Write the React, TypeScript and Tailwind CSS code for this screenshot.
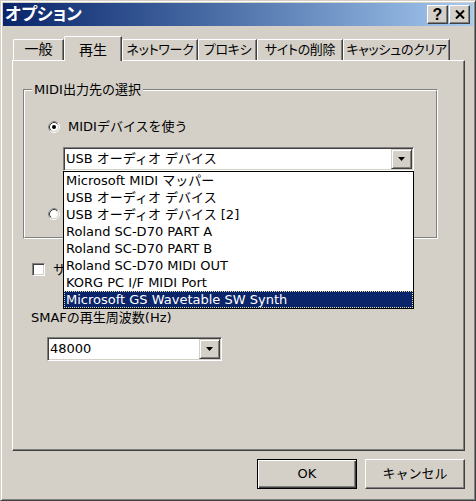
import React from 'react'

const F = "font-['DejaVu_Sans','Noto_Sans_CJK_JP',sans-serif]"
const PALT = "[font-feature-settings:'palt']"

const tabs = [
  { label: '一般', w: 'w-[51px]', t: 'text-[14px]' },
  { label: '再生', w: 'w-[58px]', t: 'text-[14px]', active: true },
  { label: 'ネットワーク', w: 'w-[76px]', t: 'text-[13px] tracking-[-0.3px]' },
  { label: 'プロキシ', w: 'w-[59px]', t: 'text-[13px] tracking-[-0.3px]' },
  { label: 'サイトの削除', w: 'w-[86px]', t: 'text-[13px] tracking-[-0.3px]' },
  { label: 'キャッシュのクリア', w: 'w-[107px]', t: 'text-[13px] tracking-[-0.3px]' },
]

const devices = [
  'Microsoft MIDI マッパー',
  'USB オーディオ デバイス',
  'USB オーディオ デバイス [2]',
  'Roland SC-D70 PART A',
  'Roland SC-D70 PART B',
  'Roland SC-D70 MIDI OUT',
  'KORG PC I/F MIDI Port',
  'Microsoft GS Wavetable SW Synth',
]

function Radio({ checked }: { checked?: boolean }) {
  return (
    <svg width="12" height="12" viewBox="0 0 12 12" className="shrink-0">
      <circle cx="6" cy="6" r="5.5" fill="none" stroke="#fff" />
      <path d="M2.11 9.89A5.5 5.5 0 0 1 9.89 2.11" fill="none" stroke="#808080" />
      <circle cx="6" cy="6" r="4.5" fill="#fff" stroke="#D4D0C8" />
      <path d="M2.82 9.18A4.5 4.5 0 0 1 9.18 2.82" fill="none" stroke="#404040" />
      {checked && <circle cx="6" cy="6" r="2" fill="#000" />}
    </svg>
  )
}

function DropButton() {
  return (
    <div className="flex h-full w-[21px] shrink-0 items-center justify-center border border-t-[#D4D0C8] border-l-[#D4D0C8] border-r-[#404040] border-b-[#404040] bg-[#D4D0C8] shadow-[inset_1px_1px_0_#fff,inset_-1px_-1px_0_#808080]">
      <svg width="7" height="4" viewBox="0 0 7 4">
        <polygon points="0,0 7,0 3.5,4" fill="#000" />
      </svg>
    </div>
  )
}

function Combo({ value, w }: { value: string; w: string }) {
  return (
    <div className={`flex h-[24px] ${w} border border-t-[#808080] border-l-[#808080] border-r-white border-b-white bg-white shadow-[inset_1px_1px_0_#404040,inset_-1px_-1px_0_#D4D0C8] p-px`}>
      <div className="flex-1 overflow-hidden whitespace-nowrap pl-px leading-[20px]">{value}</div>
      <DropButton />
    </div>
  )
}

export default function App() {
  return (
    <div className={`relative h-[501px] w-[476px] border border-t-[#D4D0C8] border-l-[#D4D0C8] border-r-[#404040] border-b-[#404040] bg-[#D4D0C8] p-[2px] text-[13px] text-black shadow-[inset_1px_1px_0_#fff,inset_-1px_-1px_0_#808080] ${F}`}>
      {/* title bar */}
      <div className="flex h-[23px] items-center justify-between bg-linear-to-r from-[#0A246A] to-[#A6CAF0] pl-[2px] pr-[3px]">
        <span className={`text-[17px] font-bold leading-none text-white ${PALT}`}>オプション</span>
        <div className="flex gap-[1px]">
          <div className="flex h-[19px] w-[21px] items-center justify-center border border-t-white border-l-white border-r-[#404040] border-b-[#404040] bg-[#D4D0C8] font-['Liberation_Sans',sans-serif] text-[16px] font-bold leading-none shadow-[inset_-1px_-1px_0_#808080]">
            ?
          </div>
          <div className="flex h-[19px] w-[21px] items-center justify-center border border-t-white border-l-white border-r-[#404040] border-b-[#404040] bg-[#D4D0C8] shadow-[inset_-1px_-1px_0_#808080]">
            <svg width="10" height="9" viewBox="0 0 10 9">
              <path d="M1 0.5l8 8M9 0.5l-8 8" stroke="#000" strokeWidth="2" />
            </svg>
          </div>
        </div>
      </div>

      <div className="pl-[9px] pr-[8px] pt-[10px]">
        {/* tabs */}
        <div className={`ml-px flex h-[24px] items-end ${PALT}`}>
          {tabs.map((t) =>
            t.active ? (
              <div
                key={t.label}
                className={`relative z-10 -mb-px flex h-[25px] ${t.w} ${t.t} items-start justify-center whitespace-nowrap rounded-tl-[2px] border-t border-l border-r border-t-white border-l-white border-r-[#404040] bg-[#D4D0C8] pt-[3px] shadow-[inset_-1px_0_0_#808080]`}
              >
                {t.label}
              </div>
            ) : (
              <div
                key={t.label}
                className={`flex h-[21px] ${t.w} ${t.t} items-center justify-center whitespace-nowrap rounded-tl-[2px] border-t border-l border-r border-t-white border-l-white border-r-[#404040] pb-px shadow-[inset_-1px_0_0_#808080]`}
              >
                {t.label}
              </div>
            )
          )}
        </div>

        {/* panel */}
        <div className="relative h-[391px] border border-t-white border-l-white border-r-[#404040] border-b-[#404040] shadow-[inset_-1px_-1px_0_#808080]">
          <div className="relative ml-[10px] mt-[28px] h-[150px] w-[415px] border border-t-[#808080] border-l-[#808080] border-r-white border-b-white">
            <div className="h-full border border-t-white border-l-white border-r-[#808080] border-b-[#808080]">
              <div className="ml-[23px] mt-[27px] flex h-[17px] items-center gap-[8px]">
                <Radio checked />
                <span>MIDIデバイスを使う</span>
              </div>
              <div className="ml-[38px] mt-[12px]">
                <Combo value="USB オーディオ デバイス" w="w-[351px]" />
              </div>
              <div className="ml-[23px] mt-[34px] flex h-[17px] items-center">
                <Radio />
              </div>
            </div>
            <span className="absolute -top-[9px] left-[8px] bg-[#D4D0C8] px-[2px] leading-[17px]">MIDI出力先の選択</span>
          </div>

          <div className="ml-[19px] mt-[22px] flex h-[17px] items-center gap-[8px]">
            <div className="h-[13px] w-[13px] border border-t-[#808080] border-l-[#808080] border-r-white border-b-white bg-white shadow-[inset_1px_1px_0_#404040,inset_-1px_-1px_0_#D4D0C8]" />
            <span>サ</span>
          </div>

          <div className="ml-[18px] mt-[31px] leading-[17px]">SMAFの再生周波数(Hz)</div>
          <div className="ml-[34px] mt-[11px]">
            <Combo value="48000" w="w-[175px]" />
          </div>
        </div>

        {/* buttons */}
        <div className="mt-[8px] flex justify-end gap-[8px]">
          <button className="flex h-[30px] w-[100px] items-center justify-center border border-black bg-[#D4D0C8] shadow-[inset_1px_1px_0_#fff,inset_-1px_-1px_0_#404040,inset_-2px_-2px_0_#808080]">
            OK
          </button>
          <button className="flex h-[30px] w-[100px] items-center justify-center border border-t-white border-l-white border-r-[#404040] border-b-[#404040] bg-[#D4D0C8] shadow-[inset_-1px_-1px_0_#808080]">
            キャンセル
          </button>
        </div>
      </div>

      {/* open dropdown list */}
      <div className="absolute left-[62px] top-[170px] h-[138px] w-[351px] border border-black bg-white">
        {devices.map((d, i) =>
          i === devices.length - 1 ? (
            <div key={d} className="h-[17px] whitespace-nowrap bg-[#0A246A] pl-[2px] leading-[17px] text-white outline-1 -outline-offset-1 outline-dotted outline-[#E8DFA0]">
              {d}
            </div>
          ) : (
            <div key={d} className="h-[17px] whitespace-nowrap pl-[2px] leading-[17px]">
              {d}
            </div>
          )
        )}
      </div>
    </div>
  )
}
